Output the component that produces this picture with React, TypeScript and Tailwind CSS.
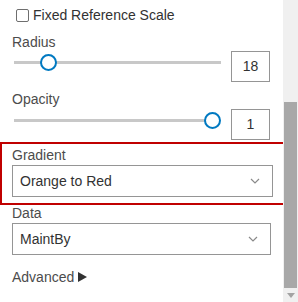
import { useState } from 'react';

function Slider({ value, min, max }: { value: number; min: number; max: number }) {
  const pct = (value - min) / (max - min);
  return (
    <div className="relative h-[22px] flex-1 mx-[2px]">
      <div className="absolute left-0 top-[10px] h-[3px] bg-[#c8c8c8]" style={{ right: pct === 1 ? '9px' : '0' }} />
      <div
        className="absolute top-[3px] w-[17px] h-[17px] rounded-full border-[2px] border-[#0079c1] bg-white"
        style={{ left: `calc(${pct} * (100% - 17px))` }}
      />
    </div>
  );
}

function Chevron() {
  return (
    <svg width="10" height="6" viewBox="0 0 10 6" className="text-[#8a8a8a]">
      <path d="M1 1 L5 5 L9 1" fill="none" stroke="currentColor" strokeWidth="1.2" />
    </svg>
  );
}

function Select({ value }: { value: string }) {
  return (
    <div className="h-[32px] border border-[#959595] bg-white flex items-center justify-between pl-[7px] pr-[12px] text-[14px] text-[#323232]">
      <span>{value}</span>
      <Chevron />
    </div>
  );
}

export default function App() {
  const [fixed, setFixed] = useState(false);
  return (
    <div
      className="w-[298px] h-[302px] flex overflow-hidden bg-white text-[#4c4c4c]"
      style={{ fontFamily: '"Liberation Sans", Arial, sans-serif' }}
    >
      <div className="w-[283px] shrink-0">
        <label className="flex items-center h-[16px] mt-[7px] pl-[16px] text-[14px] leading-[16px] text-[#323232]">
          <input
            type="checkbox"
            checked={fixed}
            onChange={(e) => setFixed(e.target.checked)}
            className="appearance-none w-[13px] h-[13px] border border-[#6e6e6e] rounded-[2px] bg-white m-0"
          />
          <span className="ml-[4px]">Fixed Reference Scale</span>
        </label>

        <div className="px-[12px]">
          <div className="mt-[11px] h-[16px] text-[14px] leading-[16px]">Radius</div>
          <div className="flex items-start gap-[8px] mt-[1px]">
            <Slider value={0.136} min={0} max={1} />
            <div className="w-[39px] h-[31px] border border-[#959595] flex items-center justify-center text-[14px] text-[#323232] mr-[1px]">
              18
            </div>
          </div>

          <div className="mt-[9px] h-[16px] text-[14px] leading-[16px]">Opacity</div>
          <div className="flex items-start gap-[8px] mt-[2px]">
            <Slider value={1} min={0} max={1} />
            <div className="w-[39px] h-[31px] border border-[#959595] flex items-center justify-center text-[14px] text-[#323232] mr-[1px]">
              1
            </div>
          </div>
        </div>

        <div className="mt-[2px] border-[2px] border-[#c00000] pt-[3px] pb-[6px] px-[10px] w-[285px]">
          <div className="h-[16px] text-[14px] leading-[16px]">Gradient</div>
          <div className="mt-[2px]">
            <Select value="Orange to Red" />
          </div>
        </div>

        <div className="px-[12px]">
          <div className="h-[16px] text-[14px] leading-[16px]">Data</div>
          <div className="mt-[2px]">
            <Select value="MaintBy" />
          </div>
          <div className="mt-[14px] h-[16px] text-[14px] leading-[16px] flex items-center">
            <span>Advanced</span>
            <svg width="11" height="12" viewBox="0 0 11 12" className="ml-[3px]">
              <path d="M1 1 L10 6 L1 11 Z" fill="#323232" />
            </svg>
          </div>
        </div>
      </div>

      <div className="w-[15px] ml-auto bg-[#f0f0f0] flex flex-col">
        <div className="h-[102px]" />
        <div className="h-[186px] mx-[1px] bg-[#a8a8a8]" />
        <div className="flex-1 flex items-center justify-center">
          <svg width="8" height="5" viewBox="0 0 8 5">
            <path d="M0 0 L8 0 L4 5 Z" fill="#a3a3a3" />
          </svg>
        </div>
      </div>
    </div>
  );
}
